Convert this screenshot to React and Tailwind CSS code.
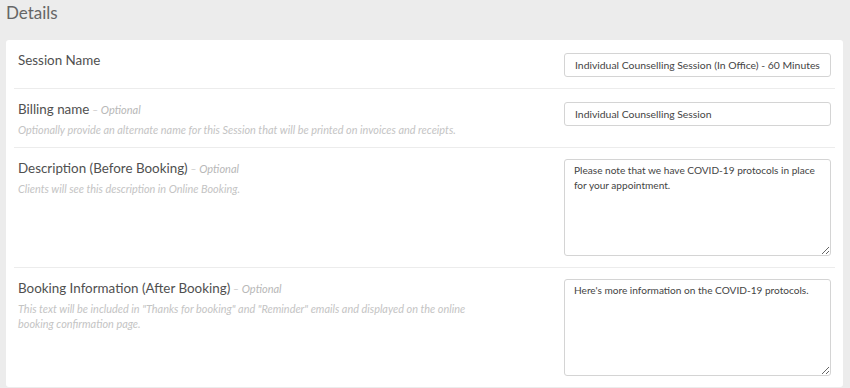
import React from 'react';

const rows = [
    {
        label: "Session Name",
        value: "Individual Counselling Session (In Office) - 60 Minutes",
        type: "input",
    },
    {
        label: "Billing name",
        optional: true,
        help: "Optionally provide an alternate name for this Session that will be printed on invoices and receipts.",
        value: "Individual Counselling Session",
        type: "input",
    },
    {
        label: "Description (Before Booking)",
        optional: true,
        help: "Clients will see this description in Online Booking.",
        value: "Please note that we have COVID-19 protocols in place for your appointment.",
        type: "textarea",
    },
    {
        label: "Booking Information (After Booking)",
        optional: true,
        help: 'This text will be included in "Thanks for booking" and "Reminder" emails and displayed on the online booking confirmation page.',
        value: "Here's more information on the COVID-19 protocols.",
        type: "textarea",
    },
];

const FieldRow = ({ row, last }) => {
    return (
        <div className={`flex justify-between px-1 ${last ? '' : 'border-b border-[#ececec]'}`}>
            <div className="pt-[10px] pb-[10px] w-[470px]">
                <div className="text-[13.4px] leading-[20px] text-[#505050]">
                    {row.label}
                    {row.optional && (
                        <span className="italic text-[11px] text-[#b8b8b8]"> – Optional</span>
                    )}
                </div>
                {row.help && (
                    <div className="mt-[2px] italic text-[10.9px] leading-[15px] text-[#c4c4c4]">
                        {row.help}
                    </div>
                )}
            </div>
            <div className="pt-[11px] pb-[11px]">
                {row.type === "input" ? (
                    <input
                        readOnly
                        value={row.value}
                        className="w-[267px] h-[24px] px-[10px] border border-[#d4d4d4] rounded-[3px] text-[10.4px] text-[#444] outline-none"
                    />
                ) : (
                    <textarea
                        readOnly
                        value={row.value}
                        className="block w-[267px] h-[97px] pl-[9px] pr-[1px] pt-[3px] border border-[#d4d4d4] rounded-[3px] text-[10.1px] leading-[15px] text-[#444] outline-none"
                    />
                )}
            </div>
        </div>
    );
};

export default function App() {
    return (
        <div className="h-[388px] overflow-hidden bg-[#ececec] font-['Lato','Liberation_Sans',sans-serif]">
            <div className="pl-[6px] pt-[2px] h-[40px] text-[17px] leading-[22px] text-[#666]">Details</div>
            <div className="ml-[6px] mr-[7px] bg-white rounded-[3px] px-2">
                {rows.map((row, i) => (
                    <FieldRow key={row.label} row={row} last={i === rows.length - 1} />
                ))}
            </div>
        </div>
    );
}
